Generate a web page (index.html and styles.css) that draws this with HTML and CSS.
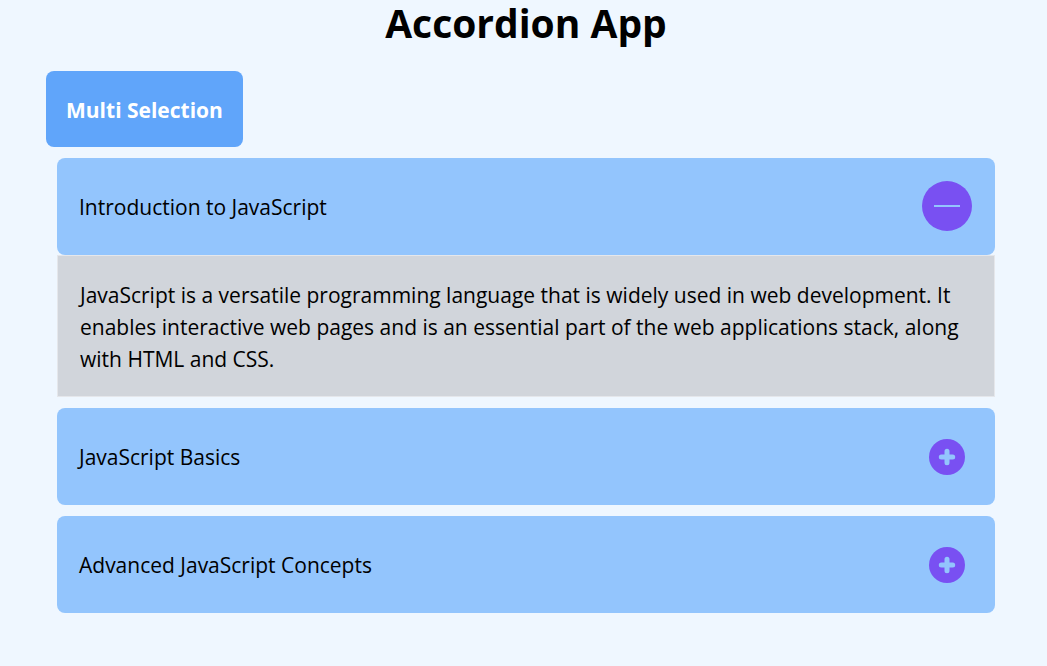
FILE: index.html
```html
<!DOCTYPE html>
<html lang="en">
<head>
<meta charset="utf-8">
<meta name="viewport" content="width=device-width, initial-scale=1">
<title>Accordion App</title>
<link rel="stylesheet" href="styles.css">
</head>
<body>
<main class="app">
  <h1 class="title">Accordion App</h1>
  <button class="mode" type="button">Multi Selection</button>
  <div class="accordion">
    <section class="item">
      <button class="header" type="button" aria-expanded="true" aria-controls="panel-intro">
        <span>Introduction to JavaScript</span>
        <svg class="icon" viewBox="0 0 52 53" aria-hidden="true"><circle class="disc" cx="26" cy="26" r="25"/><path class="thin" d="M13 26h26"/></svg>
      </button>
      <div class="panel" id="panel-intro">JavaScript is a versatile programming language that is widely used in web development. It enables interactive web pages and is an essential part of the web applications stack, along with HTML and CSS.</div>
    </section>
    <section class="item">
      <button class="header" type="button" aria-expanded="false">
        <span>JavaScript Basics</span>
        <svg class="icon" viewBox="0 0 52 53" aria-hidden="true"><circle class="disc" cx="26" cy="27" r="18"/><path class="thick" d="M20.3 27h11.4M26 21.3v11.4"/></svg>
      </button>
    </section>
    <section class="item">
      <button class="header" type="button" aria-expanded="false">
        <span>Advanced JavaScript Concepts</span>
        <svg class="icon" viewBox="0 0 52 53" aria-hidden="true"><circle class="disc" cx="26" cy="27" r="18"/><path class="thick" d="M20.3 27h11.4M26 21.3v11.4"/></svg>
      </button>
    </section>
  </div>
</main>
</body>
</html>
```
FILE: styles.css
```css
* {
  box-sizing: border-box;
}

body {
  margin: 0;
  background: #eff7ff;
  color: #000;
  font-family: "Segoe UI", "Open Sans", "Noto Sans", sans-serif;
  font-size: 21px;
  line-height: 32px;
}

.app {
  padding: 0 41px 42px 46px;
}

.title {
  margin: 0 0 25px;
  font-size: 39px;
  line-height: 46px;
  font-weight: 700;
  text-align: center;
}

.mode,
.header {
  border: 0;
  border-radius: 8px;
  font: inherit;
  cursor: pointer;
}

.mode {
  display: block;
  padding: 23px 20px 21px;
  background: #60a5fa;
  color: #fff;
  font-weight: 700;
}

.accordion {
  display: flex;
  flex-direction: column;
  gap: 11px;
  padding: 11px;
}

.header {
  display: flex;
  align-items: center;
  justify-content: space-between;
  width: 100%;
  padding: 22px;
  background: #93c5fd;
  color: inherit;
  text-align: left;
}

.icon {
  flex: none;
  width: 52px;
  height: 53px;
}

.disc {
  fill: #7950f2;
}

.thin,
.thick {
  fill: none;
  stroke: #93c5fd;
}

.thin {
  stroke-width: 2;
}

.thick {
  stroke-width: 5;
  stroke-linecap: round;
}

.panel {
  padding: 23px 22px 21px;
  border: 1px solid #e5e7eb;
  background: #d1d5db;
}
```
